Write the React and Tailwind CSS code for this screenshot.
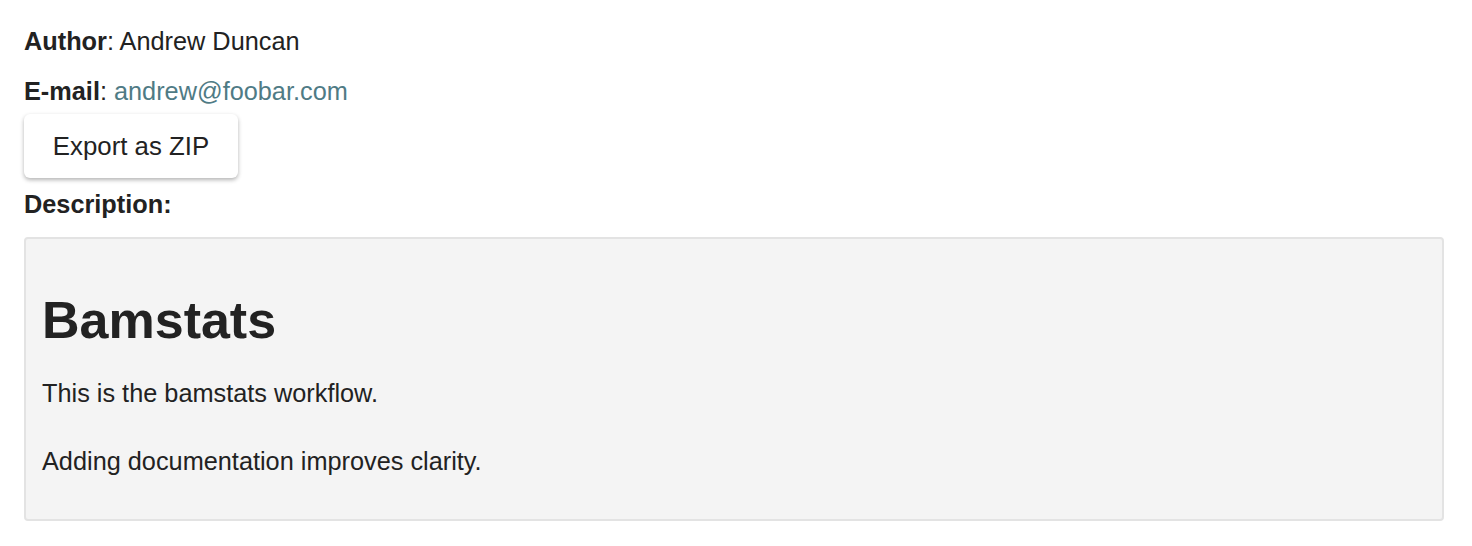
export default function App() {
  return (
    <div className="min-h-screen bg-white pl-6 pr-7 pt-[26px] text-[#222222] font-['Liberation_Sans',Arial,sans-serif] text-[25.3px]">
      <p className="leading-[30px]">
        <strong className="font-bold">Author</strong>: Andrew Duncan
      </p>
      <p className="mt-5 leading-[30px]">
        <strong className="font-bold">E-mail</strong>:{" "}
        <a href="#" className="text-[#4f7b85]">
          andrew@foobar.com
        </a>
      </p>
      <button className="mt-2 h-16 w-[214px] rounded-md bg-white shadow-[0_2px_4px_rgba(0,0,0,0.3)] text-[25.8px] text-[#222222]">
        Export as ZIP
      </button>
      <p className="mt-[11px] font-bold leading-[30px]">Description:</p>
      <div className="mt-[18px] h-[284px] rounded-[4px] border-2 border-[#e3e3e3] bg-[#f4f4f4] px-4 pt-[51px]">
        <h1 className="text-[52px] font-bold leading-[60px]">Bamstats</h1>
        <p className="mt-[28px] leading-[30px]">This is the bamstats workflow.</p>
        <p className="mt-[38px] leading-[30px]">Adding documentation improves clarity.</p>
      </div>
    </div>
  );
}
